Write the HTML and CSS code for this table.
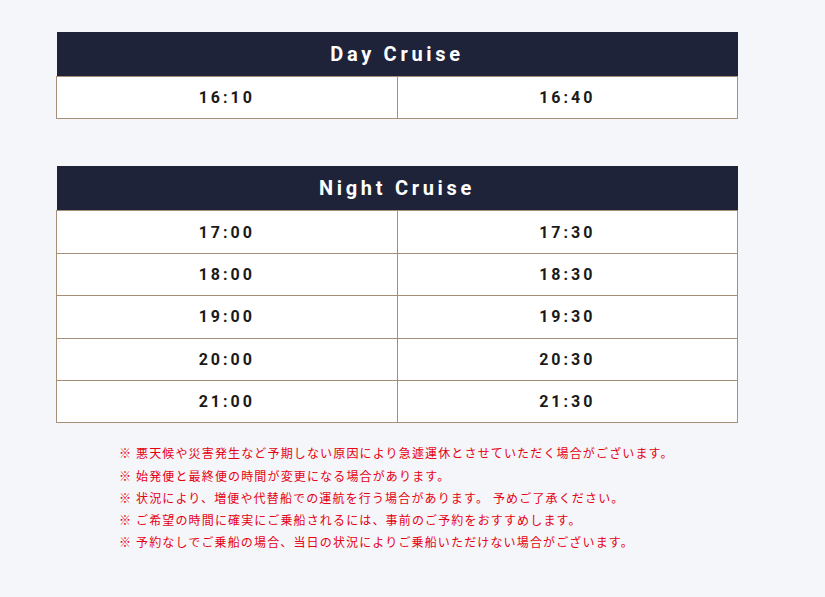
FILE: index.html
```html
<!DOCTYPE html>
<html lang="ja">
<head>
<meta charset="utf-8">
<link rel="stylesheet" href="styles.css">
</head>
<body>
<main class="page">
  <table class="timetable">
    <thead>
      <tr><th colspan="2">Day Cruise</th></tr>
    </thead>
    <tbody>
      <tr><td>16:10</td><td>16:40</td></tr>
    </tbody>
  </table>

  <table class="timetable night">
    <thead>
      <tr><th colspan="2">Night Cruise</th></tr>
    </thead>
    <tbody>
      <tr><td>17:00</td><td>17:30</td></tr>
      <tr><td>18:00</td><td>18:30</td></tr>
      <tr><td>19:00</td><td>19:30</td></tr>
      <tr><td>20:00</td><td>20:30</td></tr>
      <tr><td>21:00</td><td>21:30</td></tr>
    </tbody>
  </table>

  <ul class="notes">
    <li>※ 悪天候や災害発生など予期しない原因により急遽運休とさせていただく場合がございます。</li>
    <li>※ 始発便と最終便の時間が変更になる場合があります。</li>
    <li>※ 状況により、増便や代替船での運航を行う場合があります。 予めご了承ください。</li>
    <li>※ ご希望の時間に確実にご乗船されるには、事前のご予約をおすすめします。</li>
    <li>※ 予約なしでご乗船の場合、当日の状況によりご乗船いただけない場合がございます。</li>
  </ul>
</main>
</body>
</html>
```

FILE: styles.css
```css
html, body {
  margin: 0;
  padding: 0;
}
body {
  background: #f5f6fa;
  font-family: Roboto, "Noto Sans CJK JP", sans-serif;
}
.page {
  width: 682px;
  margin-left: 56px;
  padding-top: 32px;
}
.timetable {
  width: 682px;
  border-collapse: collapse;
  table-layout: fixed;
}
.timetable.night {
  margin-top: 47px;
}
.timetable th {
  background: #1e233a;
  color: #ffffff;
  font-size: 20px;
  font-weight: 700;
  letter-spacing: 3.7px;
  height: 44px;
  padding: 0;
  text-align: center;
}
.timetable td {
  background: #ffffff;
  border: 1px solid #a58f78;
  height: 41.4px;
  padding: 0;
  text-align: center;
  font-size: 16px;
  font-weight: 700;
  letter-spacing: 3px;
  color: #1a1a1a;
}
.notes {
  list-style: none;
  margin: 19px 0 0 63px;
  padding: 0;
  font-family: "Noto Sans CJK JP", sans-serif;
  font-size: 12px;
  letter-spacing: 1.15px;
  line-height: 22.25px;
  color: #e60012;
}
```
